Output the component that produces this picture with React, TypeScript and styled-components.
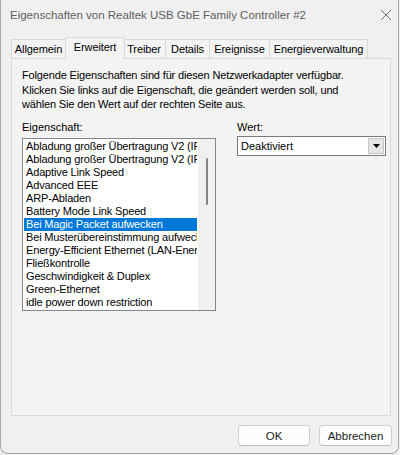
import styled, { createGlobalStyle } from "styled-components";

const GlobalStyle = createGlobalStyle`
  html, body {
    margin: 0;
    padding: 0;
    background: #f0f0f0;
  }
  body {
    width: 400px;
    height: 455px;
    overflow: hidden;
    font-family: "Liberation Sans", Arial, sans-serif;
    color: #000;
  }
`;

const Window = styled.div`
  box-sizing: border-box;
  width: 399px;
  height: 454px;
  border: 1px solid #a9a9a9;
  border-top: none;
  border-radius: 0 0 8px 8px;
  background: #f0f0f0;
  display: flex;
  flex-direction: column;
`;

const TitleBar = styled.div`
  height: 30px;
  display: flex;
  align-items: center;
  justify-content: space-between;
  padding: 0 4px 0 9px;
`;

const Title = styled.span`
  font: 11.5px "Liberation Sans", Arial, sans-serif;
  color: #5e5e5e;
`;

const CloseButton = styled.div`
  width: 16px;
  height: 16px;
  display: flex;
  align-items: center;
  justify-content: center;
`;

const Body = styled.div`
  padding: 7px 0 0 10px;
`;

const TabStrip = styled.div`
  height: 21px;
  display: flex;
  align-items: flex-end;
`;

const Tab = styled.div<{ $active?: boolean; $width: number }>`
  box-sizing: border-box;
  position: relative;
  z-index: ${({ $active }) => ($active ? 1 : 0)};
  flex: none;
  width: ${({ $active, $width }) => ($active ? $width + 4 : $width)}px;
  height: ${({ $active }) => ($active ? 22 : 19)}px;
  margin: 0 ${({ $active }) => ($active ? -2 : 0)}px
    ${({ $active }) => ($active ? -1 : 0)}px;
  padding-bottom: ${({ $active }) => ($active ? 3 : 0)}px;
  border: 1px solid #d9d9d9;
  border-bottom: none;
  background: #f3f3f3;
  display: flex;
  align-items: center;
  justify-content: center;
  font-size: 11px;
  letter-spacing: -0.1px;
  white-space: nowrap;

  & + & {
    margin-left: ${({ $active }) => ($active ? -3 : -1)}px;
  }
`;

const Panel = styled.div`
  box-sizing: border-box;
  width: 380px;
  height: 358px;
  border: 1px solid #d9d9d9;
  background: #f3f3f3;
  padding: 9px 10px;
`;

const Intro = styled.p`
  margin: 0;
  font-size: 11px;
  line-height: 14.5px;
  letter-spacing: -0.15px;
  white-space: nowrap;
`;

const Columns = styled.div`
  display: flex;
  gap: 21px;
  margin-top: 8px;
`;

const Column = styled.div`
  display: flex;
  flex-direction: column;
  gap: 4px;
`;

const Label = styled.label`
  font-size: 11px;
  line-height: 14px;
`;

const ListBox = styled.div`
  box-sizing: border-box;
  width: 194px;
  height: 173px;
  border: 1px solid #828790;
  background: #fff;
  display: flex;
`;

const Items = styled.ul`
  flex: 1;
  min-width: 0;
  margin: 0;
  padding: 1px;
  list-style: none;
  overflow: hidden;
`;

const Item = styled.li<{ $selected?: boolean }>`
  height: 13px;
  line-height: 13px;
  padding-left: 2px;
  font-size: 11px;
  letter-spacing: -0.15px;
  white-space: nowrap;
  overflow: hidden;
  background: ${({ $selected }) => ($selected ? "#0078d7" : "transparent")};
  color: ${({ $selected }) => ($selected ? "#fff" : "#000")};
`;

const ScrollTrack = styled.div`
  width: 17px;
  background: #f0f0f0;
  padding-top: 19px;
  display: flex;
  justify-content: center;
`;

const ScrollThumb = styled.div`
  width: 2px;
  height: 47px;
  border-radius: 1px;
  background: #858585;
`;

const Select = styled.div`
  box-sizing: border-box;
  width: 149px;
  height: 20px;
  border: 1px solid #7a7a7a;
  background: #fff;
  display: flex;
  margin-top: -2px;
`;

const SelectValue = styled.div`
  flex: 1;
  padding-left: 3px;
  font-size: 11px;
  line-height: 18px;
`;

const SelectArrow = styled.div`
  box-sizing: border-box;
  width: 16px;
  margin: 1px;
  border: 1px solid #c4c4c4;
  background: #e6e6e6;
  display: flex;
  align-items: center;
  justify-content: center;
`;

const Footer = styled.div`
  display: flex;
  justify-content: flex-end;
  gap: 9px;
  padding: 9px 6px 0 0;
`;

const Button = styled.button<{ $width: number }>`
  box-sizing: border-box;
  width: ${({ $width }) => $width}px;
  height: 21px;
  padding: 0;
  border: 1px solid #d0d0d0;
  border-bottom-color: #bdbdbd;
  border-radius: 4px;
  background: #fdfdfd;
  font: 11.5px "Liberation Sans", Arial, sans-serif;
  color: #1b1b1b;
`;

const tabs = [
  { label: "Allgemein", width: 55 },
  { label: "Erweitert", width: 56 },
  { label: "Treiber", width: 44 },
  { label: "Details", width: 45 },
  { label: "Ereignisse", width: 61 },
  { label: "Energieverwaltung", width: 99 },
];

const properties = [
  "Abladung großer Übertragung V2 (IPv4)",
  "Abladung großer Übertragung V2 (IPv6)",
  "Adaptive Link Speed",
  "Advanced EEE",
  "ARP-Abladen",
  "Battery Mode Link Speed",
  "Bei Magic Packet aufwecken",
  "Bei Musterübereinstimmung aufwecken",
  "Energy-Efficient Ethernet (LAN-Energiesparmodus)",
  "Fließkontrolle",
  "Geschwindigkeit & Duplex",
  "Green-Ethernet",
  "idle power down restriction",
];

const App = () => {
  return (
    <>
      <GlobalStyle />
      <Window>
        <TitleBar>
          <Title>Eigenschaften von Realtek USB GbE Family Controller #2</Title>
          <CloseButton>
            <svg width="12" height="12" viewBox="0 0 12 12">
              <path d="M1 1L11 11M11 1L1 11" stroke="#6f6f6f" strokeWidth="1" />
            </svg>
          </CloseButton>
        </TitleBar>

        <Body>
          <TabStrip>
            {tabs.map((tab) => (
              <Tab
                key={tab.label}
                $width={tab.width}
                $active={tab.label === "Erweitert"}
              >
                {tab.label}
              </Tab>
            ))}
          </TabStrip>

          <Panel>
            <Intro>
              Folgende Eigenschaften sind für diesen Netzwerkadapter verfügbar.
              <br />
              Klicken Sie links auf die Eigenschaft, die geändert werden soll, und
              <br />
              wählen Sie den Wert auf der rechten Seite aus.
            </Intro>

            <Columns>
              <Column>
                <Label>Eigenschaft:</Label>
                <ListBox>
                  <Items>
                    {properties.map((name, index) => (
                      <Item key={index} $selected={index === 6}>
                        {name}
                      </Item>
                    ))}
                  </Items>
                  <ScrollTrack>
                    <ScrollThumb />
                  </ScrollTrack>
                </ListBox>
              </Column>

              <Column>
                <Label>Wert:</Label>
                <Select>
                  <SelectValue>Deaktiviert</SelectValue>
                  <SelectArrow>
                    <svg width="7" height="4" viewBox="0 0 7 4">
                      <path d="M0 0H7L3.5 4Z" fill="#000" />
                    </svg>
                  </SelectArrow>
                </Select>
              </Column>
            </Columns>
          </Panel>
        </Body>

        <Footer>
          <Button $width={72}>OK</Button>
          <Button $width={73}>Abbrechen</Button>
        </Footer>
      </Window>
    </>
  );
};

export default App;
